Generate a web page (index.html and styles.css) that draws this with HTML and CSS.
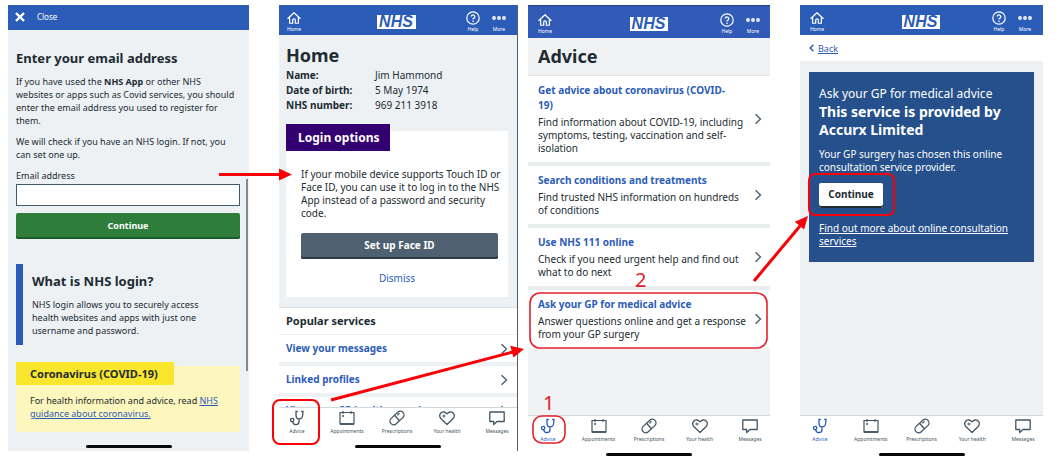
FILE: index.html
```html
<!DOCTYPE html>
<html lang="en">
<head>
<meta charset="utf-8">
<title>NHS App: ask your GP for medical advice</title>
<link rel="stylesheet" href="styles.css">
</head>
<body>
<svg class="sprite" aria-hidden="true">
  <symbol id="home" viewBox="0 0 16 14"><path d="M1 7.500 8 1l7 6.500M3 6.500V13h3.500V9.500a1.500 1.500 0 0 1 3 0V13H13V6.500" fill="none" stroke="currentColor" stroke-width="1.400" stroke-linejoin="round" stroke-linecap="round"/></symbol>
  <symbol id="help" viewBox="0 0 14 14"><circle cx="7" cy="7" r="6.200" fill="none" stroke="currentColor" stroke-width="1.200"/><path d="M5.200 5.600a1.800 1.700 0 1 1 2.700 1.500Q7 7.600 7 8.500" fill="none" stroke="currentColor" stroke-width="1.200"/><circle cx="7" cy="10.300" r=".8" fill="currentColor"/></symbol>
  <symbol id="more" viewBox="0 0 14 14"><g fill="none" stroke="currentColor" stroke-width="1.400"><circle cx="2" cy="7" r="1.200"/><circle cx="7" cy="7" r="1.200"/><circle cx="12" cy="7" r="1.200"/></g></symbol>
  <symbol id="advice" viewBox="0 0 16 16"><g fill="none" stroke="currentColor" stroke-width="1.300" stroke-linecap="round"><path d="M8.300 1.500H7v3.500c0 2.200 1.200 3.900 3 3.900s3.500-1.700 3.700-3.900l.3-3.500h-1.300M10 9v2.500c0 4.200-5.500 4.200-6.300.3"/><circle cx="3.200" cy="10" r="1.700"/></g></symbol>
  <symbol id="calendar" viewBox="0 0 16 16"><path d="M1 2.500h14v11.500H1z" fill="none" stroke="currentColor" stroke-width="1.200"/><path d="M1 14h14" stroke="currentColor" stroke-width="1.800"/><path d="M4 1.300v2.500M12 1.300v2.500" stroke="currentColor" stroke-width="1.400"/><circle cx="4" cy="6" r="1" fill="currentColor"/></symbol>
  <symbol id="pill" viewBox="0 0 16 16"><g transform="rotate(-43 8 8)" fill="none" stroke="currentColor" stroke-width="1.300"><rect x="-.2" y="4.300" width="16.400" height="7.400" rx="3.700"/><path d="M8 4.300v7.400M10 6.300h3"/></g></symbol>
  <symbol id="heart" viewBox="0 0 16 16"><path d="M8 14.500 1.800 8.500C-.8 5.300 1.700 1.600 5 2c1.300.2 2.200.9 3 1.900C8.800 2.900 9.700 2.200 11 2c3.300-.4 5.800 3.300 3.200 6.500z" fill="none" stroke="currentColor" stroke-width="1.300" stroke-linejoin="round"/><path d="M3.500 6h3M5 4.500v3" stroke="currentColor"/></symbol>
  <symbol id="speech" viewBox="0 0 16 16"><path d="M.8 2h14.400v9.500H8l-3.300 3v-3H.8z" fill="none" stroke="currentColor" stroke-width="1.300" stroke-linejoin="round"/></symbol>
  <symbol id="chevron" viewBox="0 0 8 12"><path d="m1.500 1.200 5 4.800-5 4.800" fill="none" stroke="currentColor" stroke-width="1.400"/></symbol>
</svg>

<main class="stage">
  <section class="phone login">
    <header class="closebar">
      <button class="close"><svg width="10" height="10" viewBox="0 0 10 10" aria-hidden="true"><path d="m1 1 8 8M9 1 1 9" stroke="currentColor" stroke-width="2.400"/></svg>Close</button>
    </header>
    <form class="login-body">
      <h1>Enter your email address</h1>
      <p>If you have used the <b>NHS App</b> or other NHS<br>websites or apps such as Covid services, you should<br>enter the email address you used to register for<br>them.</p>
      <p>We will check if you have an NHS login. If not, you<br>can set one up.</p>
      <label for="email">Email address</label>
      <input id="email" type="email">
      <button class="btn green" type="button">Continue</button>
      <section class="inset">
        <h2>What is NHS login?</h2>
        <p>NHS login allows you to securely access<br>health websites and apps with just one<br>username and password.</p>
      </section>
      <section class="card warning">
        <h2 class="tag">Coronavirus (COVID-19)</h2>
        <p>For health information and advice, read <a href="#">NHS<br>guidance about coronavirus.</a></p>
      </section>
    </form>
    <div class="homebar"></div>
    <div class="scrollbar"></div>
  </section>

  <section class="phone home">
    <header class="appbar">
      <a class="act" href="#"><svg><use href="#home"/></svg>Home</a>
      <span class="logo">NHS</span>
      <nav class="right"><a class="act" href="#"><svg><use href="#help"/></svg>Help</a><a class="act" href="#"><svg><use href="#more"/></svg>More</a></nav>
    </header>
    <div class="home-body">
      <h1>Home</h1>
      <dl class="details">
        <dt>Name:</dt><dd>Jim Hammond</dd>
        <dt>Date of birth:</dt><dd>5 May 1974</dd>
        <dt>NHS number:</dt><dd>969 211 3918</dd>
      </dl>
      <section class="card options">
        <h2 class="tag">Login options</h2>
        <p>If your mobile device supports Touch ID or<br>Face ID, you can use it to log in to the NHS<br>App instead of a password and security<br>code.</p>
        <button class="btn grey">Set up Face ID</button>
        <button class="dismiss">Dismiss</button>
      </section>
    </div>
    <div class="services">
      <h2>Popular services</h2>
      <a class="service" href="#">View your messages<svg class="chev"><use href="#chevron"/></svg></a>
      <a class="service" href="#">Linked profiles<svg class="chev"><use href="#chevron"/></svg></a>
      <a class="service" href="#">View your GP health record<svg class="chev"><use href="#chevron"/></svg></a>
    </div>
    <nav class="tabs">
      <a href="#"><svg><use href="#advice"/></svg>Advice</a>
      <a href="#"><svg><use href="#calendar"/></svg>Appointments</a>
      <a href="#"><svg><use href="#pill"/></svg>Prescriptions</a>
      <a href="#"><svg><use href="#heart"/></svg>Your health</a>
      <a href="#"><svg><use href="#speech"/></svg>Messages</a>
    </nav>
    <div class="homebar"></div>
  </section>

  <section class="phone advice">
    <header class="appbar">
      <a class="act" href="#"><svg><use href="#home"/></svg>Home</a>
      <span class="logo">NHS</span>
      <nav class="right"><a class="act" href="#"><svg><use href="#help"/></svg>Help</a><a class="act" href="#"><svg><use href="#more"/></svg>More</a></nav>
    </header>
    <h1>Advice</h1>
    <div class="topics">
      <a class="topic" href="#"><span><b>Get advice about coronavirus (COVID-<br>19)</b>Find information about COVID-19, including<br>symptoms, testing, vaccination and self-<br>isolation</span><svg class="chev"><use href="#chevron"/></svg></a>
      <a class="topic" href="#"><span><b>Search conditions and treatments</b>Find trusted NHS information on hundreds<br>of conditions</span><svg class="chev"><use href="#chevron"/></svg></a>
      <a class="topic" href="#"><span><b>Use NHS 111 online</b>Check if you need urgent help and find out<br>what to do next</span><svg class="chev"><use href="#chevron"/></svg></a>
      <a class="topic" href="#"><span><b>Ask your GP for medical advice</b>Answer questions online and get a response<br>from your GP surgery</span><svg class="chev"><use href="#chevron"/></svg></a>
    </div>
    <nav class="tabs">
      <a class="current" href="#"><svg><use href="#advice"/></svg>Advice</a>
      <a href="#"><svg><use href="#calendar"/></svg>Appointments</a>
      <a href="#"><svg><use href="#pill"/></svg>Prescriptions</a>
      <a href="#"><svg><use href="#heart"/></svg>Your health</a>
      <a href="#"><svg><use href="#speech"/></svg>Messages</a>
    </nav>
    <div class="homebar"></div>
  </section>

  <section class="phone provider">
    <header class="appbar">
      <a class="act" href="#"><svg><use href="#home"/></svg>Home</a>
      <span class="logo">NHS</span>
      <nav class="right"><a class="act" href="#"><svg><use href="#help"/></svg>Help</a><a class="act" href="#"><svg><use href="#more"/></svg>More</a></nav>
    </header>
    <div class="backbar"><svg width="5" height="8" viewBox="0 0 5 8" aria-hidden="true"><path d="M4.300.8 1.200 4l3.100 3.200" fill="none" stroke="currentColor" stroke-width="1.500"/></svg><a href="#">Back</a></div>
    <article class="notice">
      <h1><span>Ask your GP for medical advice</span>This service is provided by<br>Accurx Limited</h1>
      <p>Your GP surgery has chosen this online<br>consultation service provider.</p>
      <button class="btn white">Continue</button>
      <a href="#">Find out more about online consultation<br>services</a>
    </article>
    <nav class="tabs">
      <a class="current" href="#"><svg><use href="#advice"/></svg>Advice</a>
      <a href="#"><svg><use href="#calendar"/></svg>Appointments</a>
      <a href="#"><svg><use href="#pill"/></svg>Prescriptions</a>
      <a href="#"><svg><use href="#heart"/></svg>Your health</a>
      <a href="#"><svg><use href="#speech"/></svg>Messages</a>
    </nav>
    <div class="homebar"></div>
  </section>

  <svg class="notes" viewBox="0 0 1059 459" preserveAspectRatio="none">
    <g fill="none" stroke="#fb0007" stroke-width="2">
      <rect x="273" y="400" width="46" height="44" rx="7"/>
      <rect x="809" y="174" width="85" height="41" rx="6"/>
      <path d="M219 174.500h62M331 400l182-48M754 281l46-55" stroke-width="3"/>
    </g>
    <g fill="none" stroke="#e3202b" stroke-width="1.600">
      <rect x="530" y="293" width="237" height="55" rx="10"/>
      <rect x="533" y="416" width="32" height="27" rx="9"/>
    </g>
    <path d="M292 174.500l-13-6v12zM524 349l-10.500 8.500-3.300-11.800zM808 216l-4 13.500-9.200-7.700z" fill="#fb0007"/>
    <g class="step"><text x="543" y="410">1</text><text x="635" y="287">2</text></g>
  </svg>
</main>
</body>
</html>
```
FILE: styles.css
```css
* { box-sizing: border-box; }
body {
  margin: 0;
  background: #fff;
  color: #212b32;
  font: 10px/13px "Noto Sans", "Open Sans", sans-serif;
}
h1, h2, p, dl, dd { margin: 0; }
a { color: #2b5cb8; }
button { font: inherit; border: 0; cursor: pointer; }
.sprite { position: absolute; width: 0; height: 0; }

.stage {
  position: relative;
  display: grid;
  grid-template-columns:
    minmax(0, 241fr) 30fr minmax(0, 239fr) 10fr
    minmax(0, 242fr) 30fr minmax(0, 243fr);
  min-height: 100vh;
  padding: 5px 16px 0 8px;
}
.phone {
  position: relative;
  display: flex;
  flex-direction: column;
  background: #edf1f4;
  white-space: nowrap;
}
.login { grid-column: 1; margin-bottom: 8px; }
.home { grid-column: 3; margin-bottom: 8px; border-right: 1px solid #555d66; }
.advice { grid-column: 5; }
.provider { grid-column: 7; }

.homebar {
  align-self: center;
  width: 86px;
  height: 3px;
  margin: auto 0 3px;
  border-radius: 2px;
  background: #080808;
}
.scrollbar {
  position: absolute;
  top: 174px;
  right: 1px;
  width: 2px;
  height: 192px;
  background: #85898c;
}

/* Login */
.closebar { background: #2b5cb8; height: 25px; padding: 0 7px; display: flex; align-items: center; }
.close { display: flex; align-items: center; gap: 12px; background: none; color: #fff; font-size: 8px; padding: 0 0 2px; }
.login-body { display: flex; flex-direction: column; padding: 19px 9px 0 8px; font-size: 9px; }
.login-body h1 { font-size: 13px; line-height: 18px; margin-bottom: 8px; }
.login-body > p { margin-bottom: 8px; }
.login-body input { height: 22px; margin: 2px 0 7px; border: 1px solid #425a6e; background: #fff; }
.btn {
  height: 26px;
  border-radius: 2px;
  color: #fff;
  font-weight: bold;
  padding: 0 0 2px;
}
.green { background: #2e7d3b; box-shadow: inset 0 -2px #1b5a2a; }
.inset { border-left: 7px solid #2b5cb8; margin: 25px 0 17px; padding: 8px 9px; }
.inset h2 { font-size: 13px; line-height: 18px; margin-bottom: 8px; }
.card { display: flex; flex-direction: column; align-items: flex-start; }
.tag { margin-top: -4px; }
.warning { margin-top: 4px; background: #fdf6bd; padding-bottom: 12px; }
.warning .tag { background: #fae62c; font-size: 11px; line-height: 23px; padding: 0 16px 0 14px; }
.warning p { margin: 9px 14px 0; }

/* App bar */
.appbar {
  display: grid;
  grid-template-columns: 1fr auto 1fr;
  align-items: center;
  height: 30px;
  padding: 3px 10px 0 7px;
  background: #2b5cb8;
}
.act {
  display: flex;
  flex-direction: column;
  align-items: center;
  width: 16px;
  color: #fff;
  font-size: 5px;
  line-height: 8px;
  text-decoration: none;
}
.act svg { width: 14px; height: 14px; }
.right { display: flex; justify-content: flex-end; gap: 10px; }
.logo {
  padding: 0 3px 0 2px;
  background: #fff;
  color: #2b5cb8;
  font: italic bold 16px/14px "Liberation Sans", Arial, sans-serif;
}

/* Home */
.home-body { padding: 9px 9px 10px 7px; }
.home h1 { font-size: 18px; line-height: 22px; margin-bottom: 2px; }
.details { display: grid; grid-template-columns: 89px 1fr; line-height: 15px; }
.details dt { font-weight: bold; }
.options { margin-top: 18px; background: #fff; padding-bottom: 12px; }
.options .tag { margin-top: -7px; background: #330072; color: #fff; font-size: 12px; line-height: 27px; padding: 0 10px 0 12px; }
.options p { margin: 17px 0 13px 15px; }
.options .btn { align-self: stretch; margin: 0 10px 0 15px; }
.grey { background: #4f6170; box-shadow: inset 0 -2px #2b3a48; }
.dismiss { align-self: center; margin-top: 13px; padding: 0; background: none; color: #2b5cb8; }
.services { display: flex; flex: 1 1 0; flex-direction: column; gap: 4px; overflow: hidden; border-top: 1px solid #dce1e5; }
.services h2 { background: #fff; font-size: 11px; line-height: 26px; padding-left: 7px; margin-bottom: -3px; }
.service {
  display: flex;
  flex: none;
  align-items: center;
  justify-content: space-between;
  height: 27px;
  padding: 0 9px 0 7px;
  background: #fff;
  font-weight: bold;
  text-decoration: none;
}
.chev { flex: none; width: 8px; height: 12px; color: #4c6272; }

/* Tab bar */
.tabs {
  display: flex;
  justify-content: space-between;
  margin-top: auto;
  padding: 2px 2px 0;
  border-top: 1px solid #d3dade;
  background: #fff;
}
.home .tabs { margin-top: 0; padding-left: 0; }
.tabs a {
  display: flex;
  flex-direction: column;
  align-items: center;
  width: 36px;
  color: #425563;
  font-size: 5px;
  line-height: 8px;
  text-decoration: none;
}
.tabs svg { width: 16px; height: 16px; margin-bottom: 1px; }
.tabs .current { color: #2b5cb8; }
.tabs + .homebar { margin: 0; align-self: stretch; width: auto; height: 16px; border-radius: 0; background: #fff; display: flex; justify-content: center; align-items: flex-end; padding-bottom: 3px; }
.tabs + .homebar::before { content: ""; width: 86px; height: 3px; border-radius: 2px; background: #080808; }

/* Advice */
.advice { background: #f0f2f4; }
.advice .appbar { height: 33px; border-top: 1px solid #26437c; background: #315bb6; padding-left: 9px; padding-right: 9px; }
.advice h1 { font-size: 18px; line-height: 37px; padding-left: 10px; border-bottom: 1px solid #e2e5e8; }
.topics { display: flex; flex-direction: column; gap: 4px; background: #e9edee; }
.topic {
  display: flex;
  align-items: center;
  justify-content: space-between;
  padding: 7px 8px 7px 10px;
  background: #fff;
  color: #212b32;
  text-decoration: none;
}
.topic b { display: block; margin-bottom: 3px; color: #2b5cb8; line-height: 15px; }

/* Provider */
.provider .appbar { padding-left: 9px; }
.backbar { display: flex; align-items: center; gap: 4px; height: 26px; padding-left: 9px; background: #fff; color: #2b5cb8; font-size: 9px; }
.notice { display: flex; flex-direction: column; align-items: flex-start; margin: 11px 9px 0; padding: 13px 10px 14px; background: #25508b; color: #fff; }
.notice h1 { font-size: 14px; line-height: 18px; margin-bottom: 9px; }
.notice h1 span { display: block; font-size: 12px; font-weight: normal; }
.notice a { color: #fff; }
.white { width: 64px; height: 25px; margin: 9px 0 14px; background: #fff; color: #212b32; box-shadow: inset 0 -2px #212b32; }

.notes { position: absolute; inset: 0; width: 100%; height: 100%; pointer-events: none; }
.step { fill: #e3202b; font-size: 20px; }
```
